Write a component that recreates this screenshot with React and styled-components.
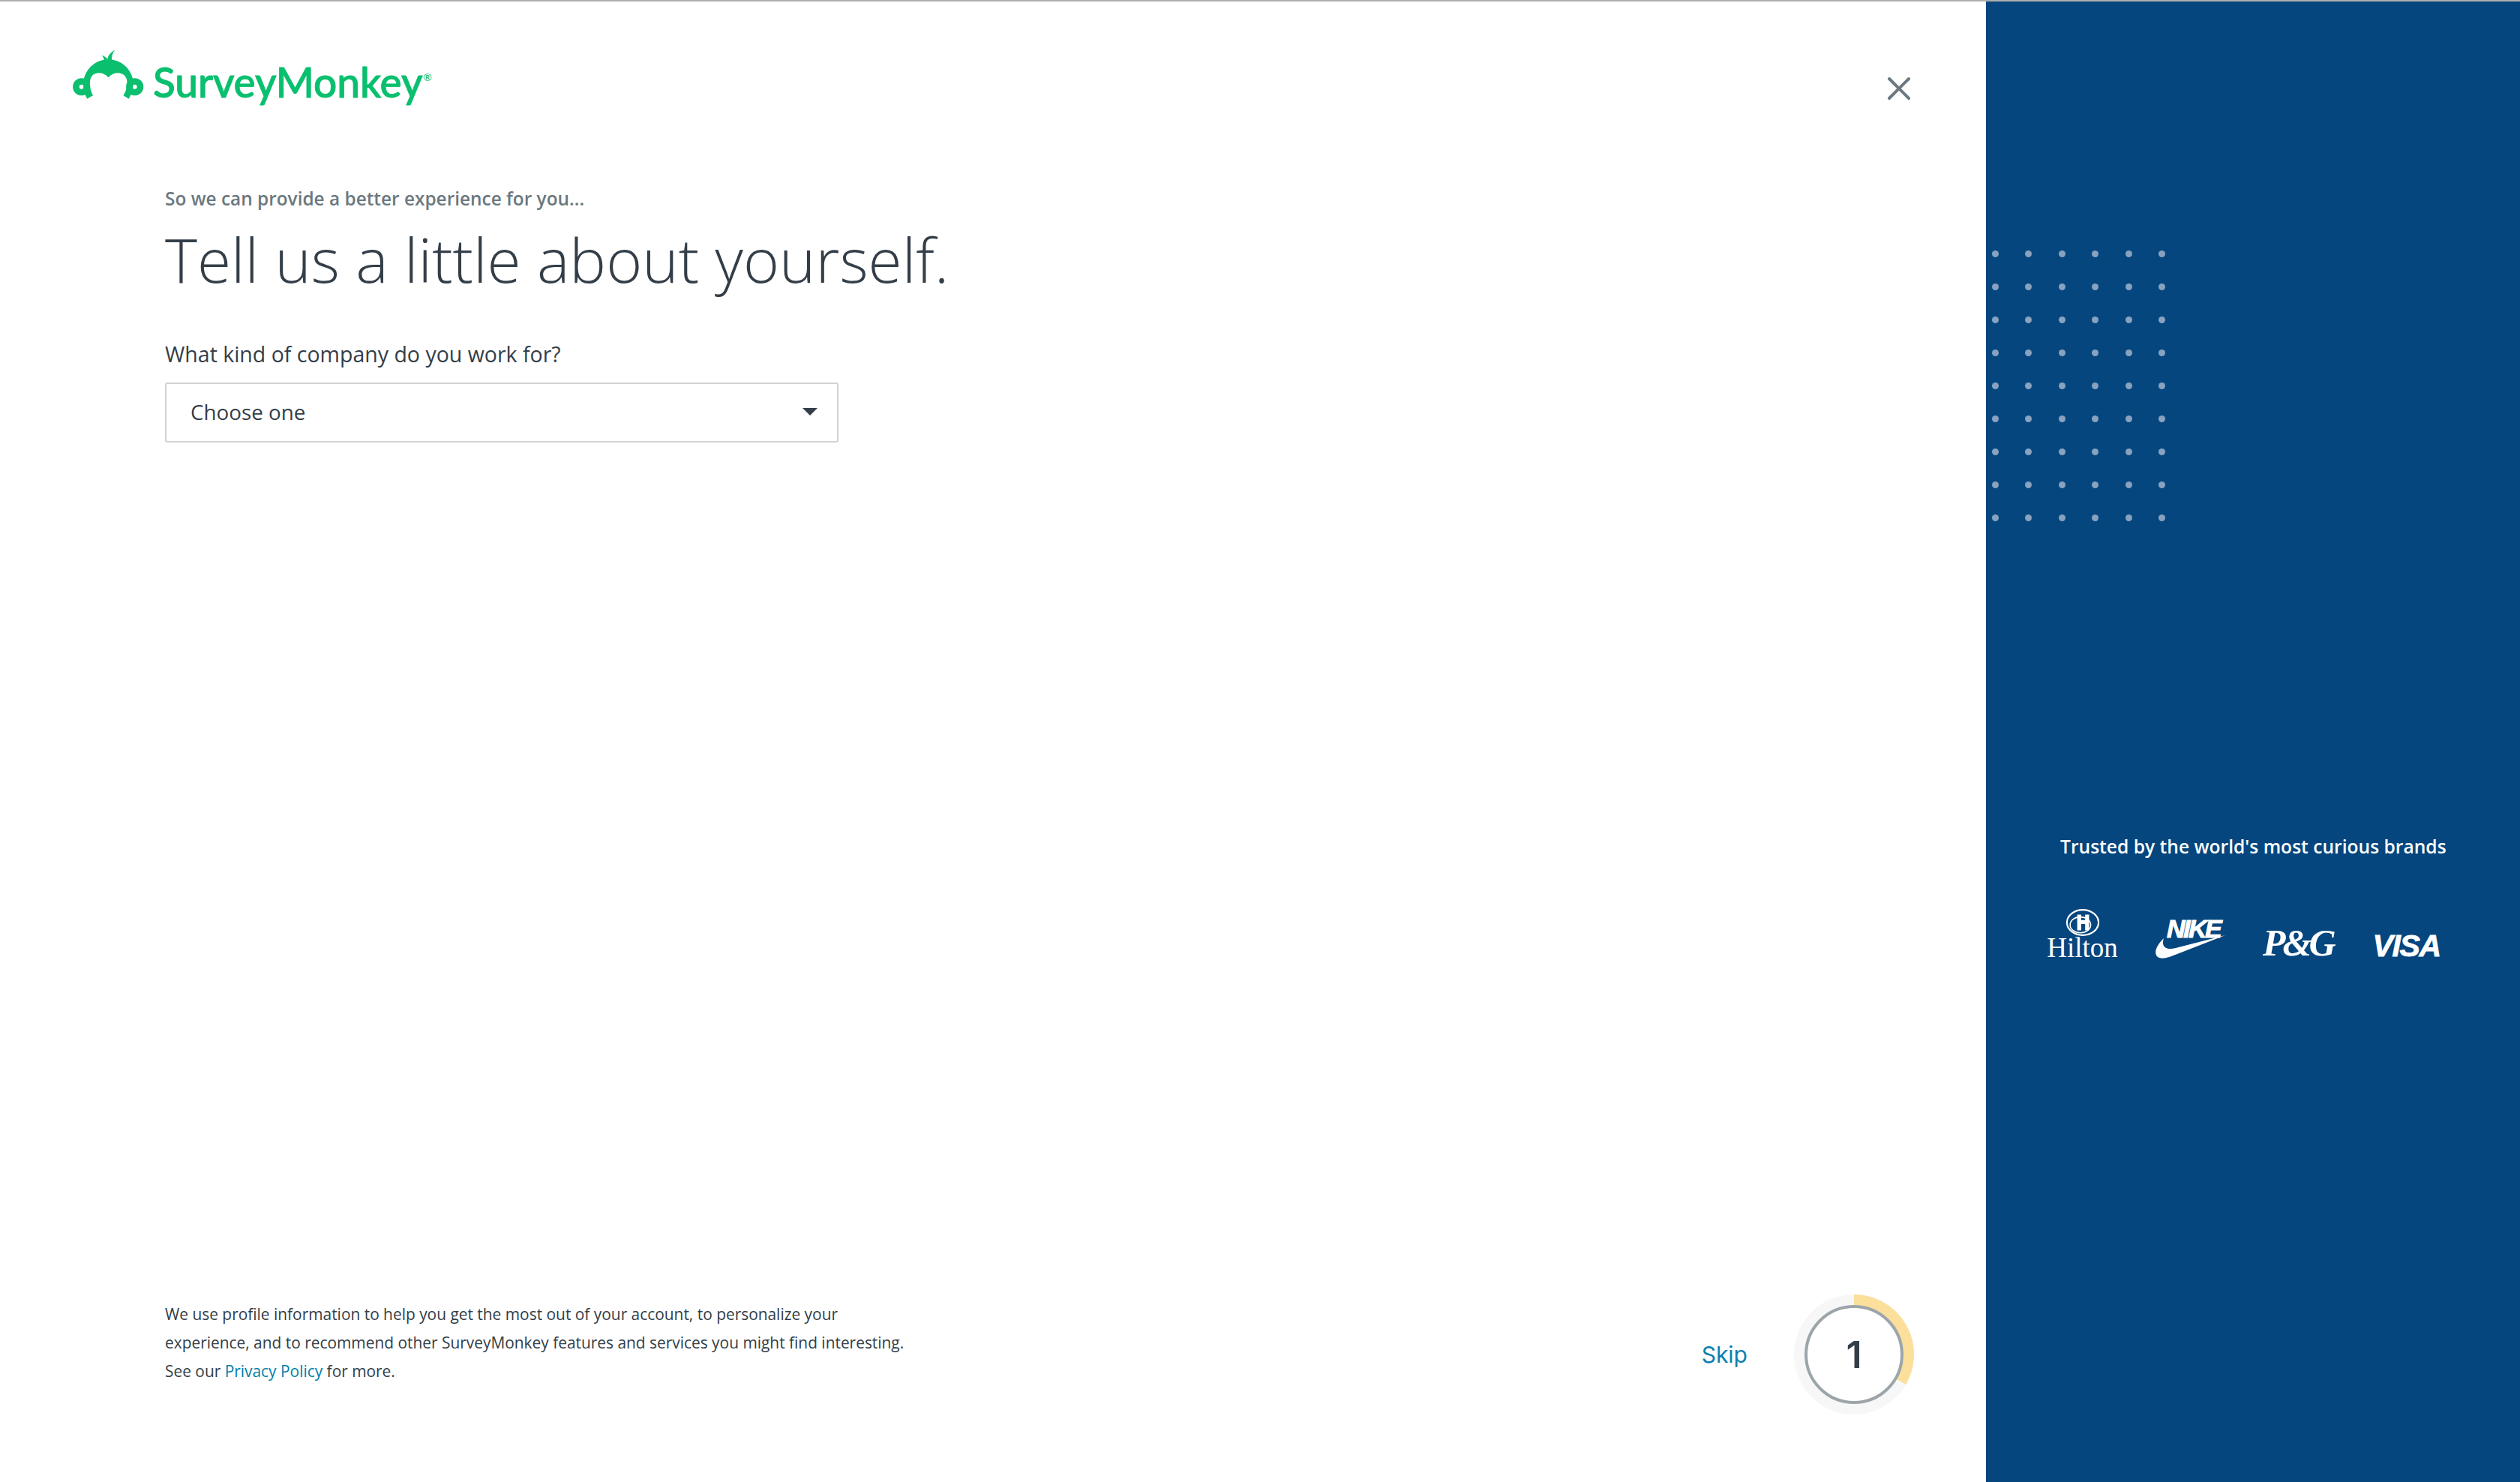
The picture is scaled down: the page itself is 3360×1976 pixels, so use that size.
import styled, { createGlobalStyle } from "styled-components";

const GlobalStyle = createGlobalStyle`
  html, body {
    margin: 0;
    padding: 0;
    background: #fff;
  }
  * {
    box-sizing: border-box;
  }
`;

const Page = styled.div`
  display: flex;
  width: 3360px;
  height: 1976px;
  overflow: hidden;
  border-top: 2px solid #aeaeae;
  font-family: "Open Sans", "Liberation Sans", sans-serif;
  color: #333e48;
`;

const Main = styled.main`
  flex: 1;
  display: flex;
  flex-direction: column;
  padding: 64px 100px 90px 96px;
`;

const Header = styled.header`
  display: flex;
  justify-content: space-between;
  align-items: flex-start;
`;

const Logo = styled.div`
  display: flex;
  align-items: flex-start;
  gap: 11px;
`;

const Wordmark = styled.span`
  font-family: "Lato", sans-serif;
  font-size: 55px;
  font-weight: 500;
  line-height: 66px;
  color: #0abf6e;
  margin-top: 10px;
  letter-spacing: -0.1px;
  -webkit-text-stroke: 0.9px #0abf6e;

  sup {
    font-size: 14px;
    line-height: 0;
    vertical-align: 22px;
    margin-left: 1px;
    -webkit-text-stroke: 0;
  }
`;

const CloseButton = styled.button`
  display: flex;
  background: none;
  border: none;
  padding: 0;
  margin-top: 36px;
  cursor: pointer;
`;

const Content = styled.section`
  flex: 1;
  padding: 106px 0 0 124px;
`;

const Eyebrow = styled.p`
  margin: 0;
  font-size: 24.4px;
  font-weight: 600;
  line-height: 34px;
  color: #6b787f;
`;

const Title = styled.h1`
  margin: 13px 0 0;
  font-size: 82px;
  font-weight: 300;
  line-height: 100px;
  color: #333e48;
`;

const Label = styled.label`
  display: block;
  margin-top: 57px;
  font-size: 28.5px;
  line-height: 40px;
`;

const SelectBox = styled.button`
  display: flex;
  align-items: center;
  justify-content: space-between;
  width: 898px;
  height: 80px;
  margin-top: 18px;
  padding: 0 26px 3px 32px;
  background: #fff;
  border: 2px solid #d0d2d3;
  border-radius: 3px;
  font: inherit;
  font-size: 27.8px;
  color: #333e48;
  cursor: pointer;
`;

const Caret = styled.span`
  width: 0;
  height: 0;
  border-left: 10px solid transparent;
  border-right: 10px solid transparent;
  border-top: 10px solid #333e48;
`;

const Footer = styled.footer`
  display: flex;
  justify-content: space-between;
  align-items: center;
  padding-left: 124px;
`;

const Notice = styled.p`
  margin: 0 0 32px;
  font-size: 20.9px;
  line-height: 38px;
  color: #333e48;
`;

const PolicyLink = styled.a`
  color: #007faa;
  text-decoration: none;
`;

const Actions = styled.div`
  display: flex;
  align-items: center;
  gap: 62px;
  margin-right: -4px;
`;

const SkipLink = styled.a`
  font-family: "Inter", sans-serif;
  font-size: 30px;
  color: #0b7fae;
  cursor: pointer;
`;

const Progress = styled.div`
  position: relative;
  width: 160px;
  height: 160px;
`;

const StepNumber = styled.span`
  position: absolute;
  inset: 0;
  display: flex;
  align-items: center;
  justify-content: center;
  font-family: "Inter", sans-serif;
  font-size: 50px;
  font-weight: 600;
  color: #333e48;
`;

const Panel = styled.aside`
  width: 712px;
  display: flex;
  flex-direction: column;
  background: #05467e;
  padding-top: 332px;
`;

const Dots = styled.div`
  display: grid;
  grid-template-columns: repeat(6, 9px);
  grid-auto-rows: 9px;
  column-gap: 35.4px;
  row-gap: 35px;
  margin-left: 8px;
`;

const Dot = styled.i`
  display: block;
  border-radius: 50%;
  background: #88a2c0;
`;

const Brands = styled.div`
  margin-top: 417px;
  padding-left: 82px;
`;

const BrandsTitle = styled.h2`
  margin: 0 0 0 17px;
  font-size: 24.6px;
  font-weight: 600;
  line-height: 34px;
  color: #fff;
`;

const BrandRow = styled.div`
  display: flex;
  align-items: flex-end;
  gap: 50px;
  margin-top: 67px;
  height: 66px;
  color: #fff;
`;

const Hilton = styled.div`
  display: flex;
  flex-direction: column;
  align-items: center;
  width: 93px;
  font-family: "Liberation Serif", serif;
  font-size: 37px;
  line-height: 30px;
`;

const Nike = styled.div`
  position: relative;
  width: 94px;
  height: 54px;
`;

const NikeWord = styled.span`
  position: absolute;
  left: 16px;
  top: -3px;
  font-family: "Liberation Sans", sans-serif;
  font-size: 34px;
  font-weight: 700;
  font-style: italic;
  letter-spacing: -2.5px;
  line-height: 32px;
  -webkit-text-stroke: 1px #fff;
`;

const Pg = styled.span`
  font-family: "Liberation Serif", serif;
  font-size: 50px;
  font-weight: 700;
  font-style: italic;
  letter-spacing: -4px;
  line-height: 44px;
  margin-right: 3px;
`;

const Visa = styled.span`
  font-family: "Liberation Sans", sans-serif;
  font-size: 41px;
  font-weight: 700;
  font-style: italic;
  letter-spacing: -1.4px;
  line-height: 36px;
  -webkit-text-stroke: 0.8px #fff;
`;

const MonkeyMark = () => (
  <svg width="97" height="68" viewBox="45 45 290 205" fill="#0abf6e">
    <path d="M105 243 L128 230 C112 200 112 165 125 150 C140 135 170 135 190 157 C210 135 240 135 255 150 C270 165 270 200 250 230 L272 243 C285 222 290 200 290 170 C280 120 240 85 190 85 C140 85 100 120 90 170 C88 200 92 222 105 243 Z" />
    <path
      fillRule="evenodd"
      d="M82 160 A35 35 0 1 0 82 230 A35 35 0 1 0 82 160 Z M82 186 A9 9 0 1 1 82 204 A9 9 0 1 1 82 186 Z"
    />
    <path
      fillRule="evenodd"
      d="M296 160 A35 35 0 1 1 296 230 A35 35 0 1 1 296 160 Z M296 186 A9 9 0 1 0 296 204 A9 9 0 1 0 296 186 Z"
    />
    <path d="M186 90 C186 72 198 56 216 48 C206 60 202 74 204 90 Z" />
    <path d="M172 90 C174 82 170 74 162 68 C172 70 182 76 188 84 Z" />
  </svg>
);

const CloseIcon = () => (
  <svg width="32" height="32" viewBox="0 0 32 32" stroke="#6b787f" strokeWidth="4" strokeLinecap="round">
    <path d="M3 3 L29 29 M29 3 L3 29" />
  </svg>
);

const ProgressRing = () => (
  <svg width="160" height="160" viewBox="0 0 160 160" fill="none">
    <circle cx="80" cy="80" r="73" stroke="#f7f7f7" strokeWidth="14" />
    <path d="M80 7 A73 73 0 0 1 143.2 116.5" stroke="#fbdf9a" strokeWidth="14" />
    <circle cx="80" cy="80" r="64" fill="#fff" stroke="#9ca5a9" strokeWidth="4" />
  </svg>
);

const HiltonEmblem = () => (
  <svg width="48" height="38" viewBox="0 0 44 36" fill="none" stroke="#fff">
    <ellipse cx="22" cy="18" rx="20" ry="16" strokeWidth="2" />
    <ellipse cx="19" cy="21" rx="13" ry="10" strokeWidth="1.5" />
    <path d="M15 8 H20 V15 H25 V8 H30 V28 H25 V20 H20 V28 H15 Z" fill="#fff" stroke="none" />
  </svg>
);

const Swoosh = () => (
  <svg width="94" height="54" viewBox="0 0 94 54" fill="#fff" style={{ position: "absolute", left: 0, top: 0 }}>
    <path d="M12 26 C2 36 -2 46 4 51 C10 55 20 51 30 47 L94 22 L28 39 C16 42 8 38 12 26 Z" />
  </svg>
);

const dots = Array.from({ length: 54 });

export default function App() {
  return (
    <Page>
      <GlobalStyle />
      <Main>
        <Header>
          <Logo>
            <MonkeyMark />
            <Wordmark>
              SurveyMonkey<sup>®</sup>
            </Wordmark>
          </Logo>
          <CloseButton aria-label="Close">
            <CloseIcon />
          </CloseButton>
        </Header>
        <Content>
          <Eyebrow>So we can provide a better experience for you...</Eyebrow>
          <Title>Tell us a little about yourself.</Title>
          <Label>What kind of company do you work for?</Label>
          <SelectBox>
            Choose one
            <Caret />
          </SelectBox>
        </Content>
        <Footer>
          <Notice>
            We use profile information to help you get the most out of your account, to personalize your
            <br />
            experience, and to recommend other SurveyMonkey features and services you might find interesting.
            <br />
            See our <PolicyLink>Privacy Policy</PolicyLink> for more.
          </Notice>
          <Actions>
            <SkipLink>Skip</SkipLink>
            <Progress>
              <ProgressRing />
              <StepNumber>1</StepNumber>
            </Progress>
          </Actions>
        </Footer>
      </Main>
      <Panel>
        <Dots>
          {dots.map((_, i) => (
            <Dot key={i} />
          ))}
        </Dots>
        <Brands>
          <BrandsTitle>Trusted by the world's most curious brands</BrandsTitle>
          <BrandRow>
            <Hilton>
              <HiltonEmblem />
              Hilton
            </Hilton>
            <Nike>
              <Swoosh />
              <NikeWord>NIKE</NikeWord>
            </Nike>
            <Pg>P&amp;G</Pg>
            <Visa>VISA</Visa>
          </BrandRow>
        </Brands>
      </Panel>
    </Page>
  );
}
